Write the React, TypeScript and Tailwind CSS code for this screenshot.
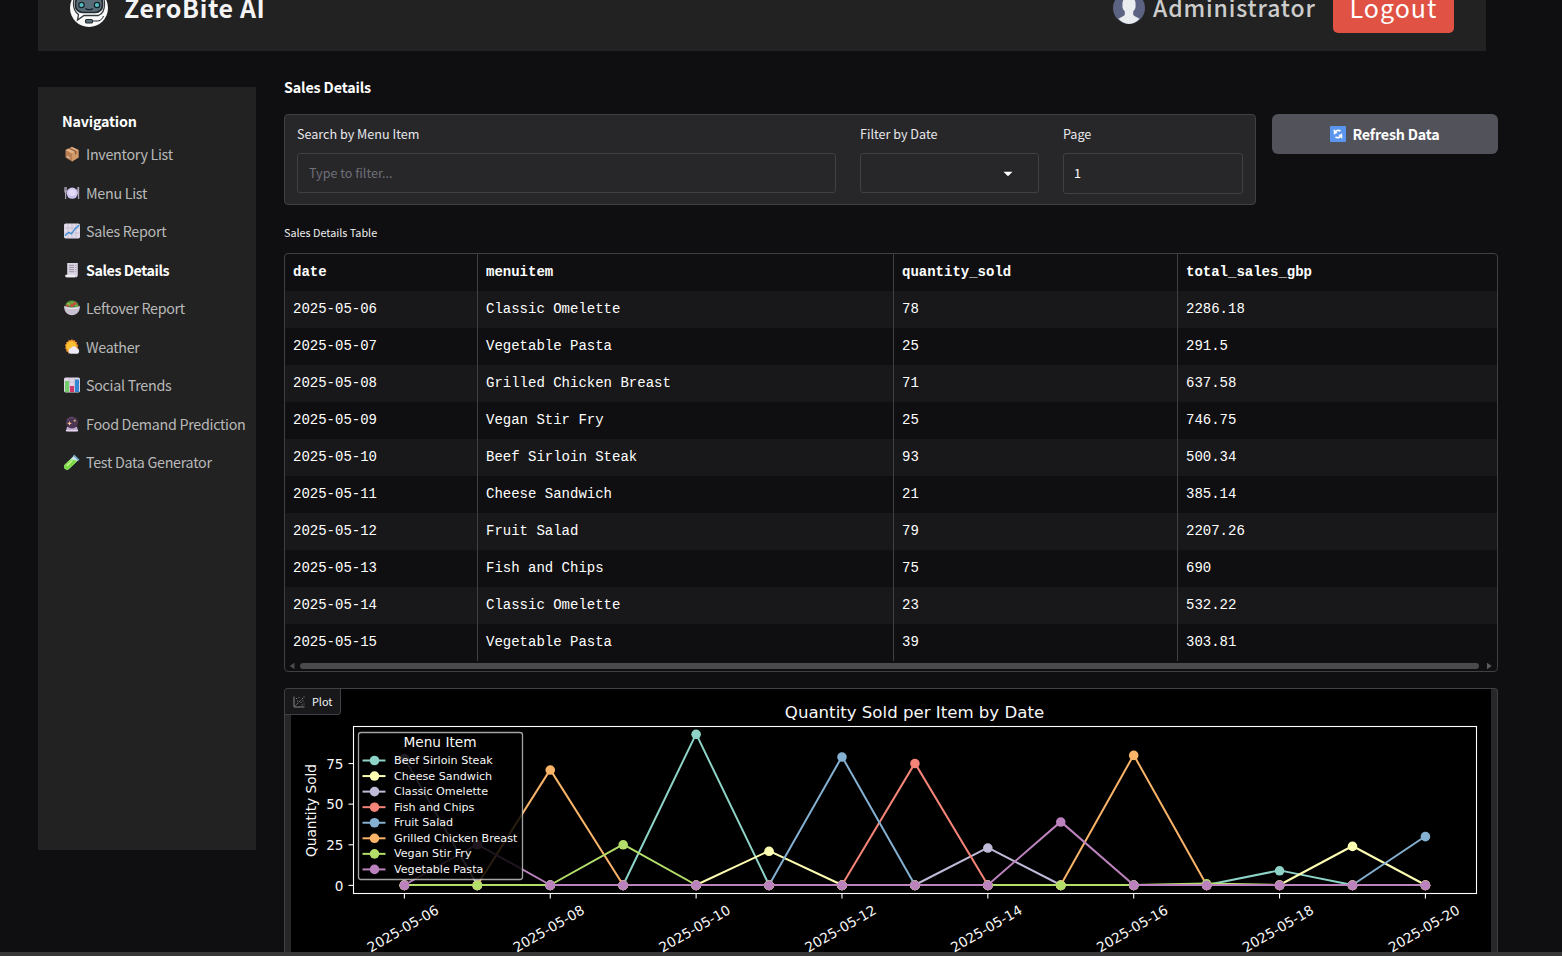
import type { ReactNode } from "react";

const SANS = "font-['Noto_Sans_CJK_SC',sans-serif]";

const Box = () => (
  <svg viewBox="0 0 16 16" className="size-4">
    <path d="M8 1 14.500 4v7.500L8 15.400 1.500 11.500V4z" fill="#b97f55" />
    <path d="M8 1 14.500 4 8 7.400 1.500 4z" fill="#e3b183" />
    <path d="M8 7.400 14.500 4v7.500L8 15.400z" fill="#d09a68" />
    <path d="m4.400 2.600 6.600 3.200v3l1.400-.8V5L6 1.900z" fill="#8a5a3c" />
    <path d="m3 10 2.600 1.600v1L3 11z" fill="#efe0d2" />
  </svg>
);
const Plate = () => (
  <svg viewBox="0 0 16 16" className="size-4">
    <path d="M.3 2h2.600v5L2.200 8v6H1V8L.3 7zM13.400 2h1.800v12h-1.300V9h-.8z" fill="#aaa2b4" />
    <path d="M1.200 2v3M2.100 2v3" stroke="#4b4653" strokeWidth=".4" />
    <circle cx="8.200" cy="8.200" r="5.600" fill="#cfc4ee" />
    <circle cx="8.200" cy="8" r="3.700" fill="#e2daf8" />
    <path d="M5.200 10.400a3.800 3.800 0 0 0 6 0" fill="none" stroke="#b5a6dd" strokeWidth=".7" />
  </svg>
);
const ChartUp = () => (
  <svg viewBox="0 0 16 16" className="size-4">
    <rect y=".6" width="16" height="14.800" rx="1.600" fill="#e2dbea" />
    <path d="M4 .8v14.400M8 .8v14.400M12 .8v14.400M.2 5h15.600M.2 10h15.600" stroke="#bdb2c9" strokeWidth=".6" />
    <path d="m.8 12.600 4.200-3.300 2.400 1.600 3.800-5.200L15.300 2" fill="none" stroke="#3b8fd0" strokeWidth="1.400" />
  </svg>
);
const Receipt = () => (
  <svg viewBox="0 0 16 16" className="size-4">
    <path d="M3.200 1h10.600v12.800l-1 1.400H2.600c-1 0-1.400-.8-1.100-1.900h1.700z" fill="#d9d3e2" />
    <path d="M1.400 12.700h9.500v2.500H2.500c-.8 0-1.200-.8-1.100-2.500z" fill="#f0ecf5" />
    <path d="M5 3.400h5M5 5.500h5M5 7.600h5M5 9.700h5M11.300 3.400h1M11.300 5.500h1M11.300 7.600h1M11.300 9.700h1" stroke="#8b8494" strokeWidth=".8" />
  </svg>
);
const Salad = () => (
  <svg viewBox="0 0 16 16" className="size-4">
    <ellipse cx="8" cy="5.200" rx="6.600" ry="4.600" fill="#4f8b39" />
    <circle cx="4.600" cy="4.300" r="1.800" fill="#82bb4a" />
    <circle cx="8" cy="2.600" r="1.700" fill="#6fa93c" />
    <circle cx="11" cy="3.600" r="1.600" fill="#ce4a3f" />
    <circle cx="3.500" cy="5.800" r="1.300" fill="#c9473f" />
    <circle cx="8" cy="5.200" r="1.700" fill="#c9503f" />
    <circle cx="12.400" cy="5.800" r="1.300" fill="#75b546" />
    <path d="M.2 5.800C3 8.100 13 8.100 15.800 5.800c.4 5.400-2.700 9.400-7.800 9.400S-.2 11.200.2 5.800z" fill="#c9c1d0" />
    <path d="M.6 7.200c3.600 1.900 11.200 1.900 14.800 0" fill="none" stroke="#ece6f0" strokeWidth="1" />
  </svg>
);
const Sun = () => (
  <svg viewBox="0 0 16 16" className="size-4">
    <path d="m8 0 1 1.600 1.800-.7.3 1.900 2 .3-.4 1.900 1.700 1.200-1 1.600 1 1.800-10 5.100-.4-2-1.900-.3.4-1.900L.9 9.300l1-1.600L.8 6l1.600-1.100L2.200 3l2-.3.500-1.900 1.900.7z" fill="#ed8f2d" />
    <circle cx="7.200" cy="7.200" r="5" fill="#fbc02f" />
    <path d="M6.800 14.800a2.900 2.900 0 0 1 .1-5.700 3.400 3.400 0 0 1 6.200.5 2.700 2.700 0 0 1 .2 5.200z" fill="#edeaf6" />
    <path d="M5.200 13.900c2 1.300 7.200 1.200 9.500 0-.4.600-1 .9-1.700.9H7.200c-.8 0-1.500-.3-2-.9z" fill="#bdb7d8" />
  </svg>
);
const Bars = () => (
  <svg viewBox="0 0 16 16" className="size-4">
    <rect y=".6" width="16" height="14.800" rx="1.600" fill="#ded6e6" />
    <path d="M5.500.8v14M10.500.8v14M0 5h16M0 10h16" stroke="#b9aec4" strokeWidth=".5" />
    <path d="M1 4h4v11H1z" fill="#72cc6a" />
    <path d="M6 9h4v6H6z" fill="#cf3868" />
    <path d="M11 2.500h4V15h-4z" fill="#3386d2" />
  </svg>
);
const Crystal = () => (
  <svg viewBox="0 0 16 16" className="size-4">
    <path d="M3 11h10l1.200 4c-2 .8-10.400.8-12.400 0z" fill="#c0abd0" />
    <path d="M2.200 14h11.600l.4 1.200H1.800z" fill="#e7daee" />
    <circle cx="8" cy="6.500" r="6.100" fill="#4b3755" />
    <path d="M3.500 4.400A5.200 5.200 0 0 1 9 1.600" fill="none" stroke="#6c5379" strokeWidth=".8" />
    <path d="m5.500 5 .7 1.700 1.700.7-1.700.7-.7 1.700-.7-1.700-1.700-.7 1.700-.7z" fill="#ffc28d" />
    <path d="m10.800 3 .5 1.200 1.200.5-1.200.5-.5 1.200-.5-1.200-1.200-.5 1.200-.5z" fill="#dcb66c" />
  </svg>
);
const Tube = () => (
  <svg viewBox="0 0 16 16" className="size-4">
    <path d="m9.800 1.800 4.400 4.400-9 8.600a3 3 0 0 1-4.300-4.200z" fill="#c7e4e3" />
    <path d="m6.400 5.300 6.900 1.700-8.100 7.800a3 3 0 0 1-4.300-4.200z" fill="#7cda47" />
    <path d="m3.200 11.400 4.700-4.600" stroke="#c6f68f" strokeWidth="1.500" strokeLinecap="round" />
    <path d="m10.200.6 5.300 5.200-1.200 1L9.200 1.700z" fill="#76a9cf" />
  </svg>
);

const nav: [string, ReactNode][] = [
  ["Inventory List", <Box />],
  ["Menu List", <Plate />],
  ["Sales Report", <ChartUp />],
  ["Sales Details", <Receipt />],
  ["Leftover Report", <Salad />],
  ["Weather", <Sun />],
  ["Social Trends", <Bars />],
  ["Food Demand Prediction", <Crystal />],
  ["Test Data Generator", <Tube />],
];

const rows = [
  ["2025-05-06", "Classic Omelette", "78", "2286.18"],
  ["2025-05-07", "Vegetable Pasta", "25", "291.5"],
  ["2025-05-08", "Grilled Chicken Breast", "71", "637.58"],
  ["2025-05-09", "Vegan Stir Fry", "25", "746.75"],
  ["2025-05-10", "Beef Sirloin Steak", "93", "500.34"],
  ["2025-05-11", "Cheese Sandwich", "21", "385.14"],
  ["2025-05-12", "Fruit Salad", "79", "2207.26"],
  ["2025-05-13", "Fish and Chips", "75", "690"],
  ["2025-05-14", "Classic Omelette", "23", "532.22"],
  ["2025-05-15", "Vegetable Pasta", "39", "303.81"],
];

const series: { name: string; color: string; points: Record<number, number> }[] = [
  { name: "Beef Sirloin Steak", color: "#8dd3c7", points: { 4: 93, 12: 9 } },
  { name: "Cheese Sandwich", color: "#feffb3", points: { 5: 21, 13: 24 } },
  { name: "Classic Omelette", color: "#bfbbd9", points: { 0: 78, 8: 23 } },
  { name: "Fish and Chips", color: "#f58478", points: { 7: 75 } },
  { name: "Fruit Salad", color: "#84b0d1", points: { 6: 79, 14: 30 } },
  { name: "Grilled Chicken Breast", color: "#f9b469", points: { 2: 71, 10: 80 } },
  { name: "Vegan Stir Fry", color: "#b3de69", points: { 3: 25, 11: 1 } },
  { name: "Vegetable Pasta", color: "#bc82bd", points: { 1: 25, 9: 39 } },
];
const days = Array.from({ length: 15 }, (_, i) => i);
const px = (d: number) => 404.4 + d * 72.93;
const py = (v: number) => 885.4 - v * 1.625;

function Chart() {
  return (
    <svg viewBox="291 689 1200 263" width="1200" height="263" className="block bg-black font-['DejaVu_Sans',sans-serif]" fill="#f8f8f8">
      <text x="914.500" y="717.600" fontSize="16.600" textAnchor="middle">Quantity Sold per Item by Date</text>
      <text transform="translate(316 810.500) rotate(-90)" fontSize="13.700" textAnchor="middle">Quantity Sold</text>
      {[0, 25, 50, 75].map((v) => (
        <g key={v}>
          <path d={`M348.500 ${py(v)}H353.500`} stroke="#fff" strokeWidth="1.100" />
          <text x="343.500" y={py(v) + 5.2} fontSize="13.600" textAnchor="end">{v}</text>
        </g>
      ))}
      {[0, 2, 4, 6, 8, 10, 12, 14].map((d) => (
        <g key={d}>
          <path d={`M${px(d)} 893.500v5`} stroke="#fff" strokeWidth="1.100" />
          <text transform={`translate(${px(d) - 1.6} 928.500) rotate(-30)`} y="5" fontSize="13.700" textAnchor="middle">
            {`2025-05-${String(d + 6).padStart(2, "0")}`}
          </text>
        </g>
      ))}
      {series.map((s) => (
        <g key={s.name}>
          <polyline points={days.map((d) => `${px(d)},${py(s.points[d] ?? 0) - 0.4}`).join(" ")} fill="none" stroke={s.color} strokeWidth="2" strokeLinejoin="round" />
          {days.map((d) => (
            <circle key={d} cx={px(d)} cy={py(s.points[d] ?? 0)} r="4.800" fill={s.color} />
          ))}
        </g>
      ))}
      <rect x="353.500" y="726.500" width="1123" height="167" fill="none" stroke="#fff" strokeWidth="1.100" />
      <rect x="358.500" y="732.500" width="164" height="147" rx="2.500" fill="#000" fillOpacity=".84" stroke="#ccc" strokeOpacity=".8" strokeWidth="1.300" />
      <text x="440" y="746.800" fontSize="13.700" textAnchor="middle">Menu Item</text>
      {series.map((s, i) => (
        <g key={s.name}>
          <path d={`M362.500 ${760.5 + i * 15.56}h23`} stroke={s.color} strokeWidth="2" />
          <circle cx="374.500" cy={760.5 + i * 15.56} r="4.800" fill={s.color} />
          <text x="394" y={764.1 + i * 15.56} fontSize="11.150">{s.name}</text>
        </g>
      ))}
    </svg>
  );
}

function RobotLogo() {
  return (
    <svg viewBox="0 0 38 38" className="size-[38px]">
      <circle cx="19" cy="19" r="19" fill="#fafafa" />
      <path d="M8 6h22c3 1 4.500 4 4.500 9s-2 10-6 11.500H14L7.500 31l1-5.500C5 23 3.500 19 3.500 15S5 7 8 6z" fill="#fff" stroke="#33383c" strokeWidth="1.300" />
      <rect x="5.500" y="7" width="27" height="16.500" rx="7" fill="#596d78" stroke="#20272d" strokeWidth="1.700" />
      <circle cx="11.500" cy="16" r="2.700" fill="#54bec2" stroke="#182126" strokeWidth="1.200" />
      <circle cx="27" cy="16" r="2.700" fill="#54bec2" stroke="#182126" strokeWidth="1.200" />
      <path d="M15.500 19.500c1.500 1.500 6 1.500 7.500 0" fill="none" stroke="#182126" strokeWidth="1.100" />
      <rect x="15.500" y="30.500" width="7" height="3.500" rx="1.300" fill="#596d78" stroke="#20272d" strokeWidth="1.100" />
      <path d="M23 32h5c3-.5 4.500-2.500 5.500-5" fill="none" stroke="#20272d" strokeWidth="1" />
    </svg>
  );
}

function Avatar() {
  return (
    <svg viewBox="0 0 32 32" className="size-8">
      <circle cx="16" cy="16" r="16" fill="#5c6282" />
      <path d="M16 5c4.500 0 7 3 6.500 8 .5 3-1 5-2.300 6.200v3.300c.6 2 4.300 2.700 6.300 4.200A15.900 15.900 0 0 1 16 32a15.900 15.900 0 0 1-10.500-5.300c2-1.500 5.700-2.200 6.300-4.200v-3.300C10.500 18 9 16 9.500 13 9 8 11.500 5 16 5z" fill="#e9edf0" />
    </svg>
  );
}

const label = "block text-[12.600px] leading-5 text-[#e8e8ea] whitespace-nowrap";
const field = "mt-[9px] flex items-center rounded-[3px] border border-[#3f3f46] bg-[#27272a] text-[12.600px] leading-5";

export default function App() {
  return (
    <div className={`${SANS} flex h-[956px] w-[1562px] flex-col overflow-hidden bg-[#0f0f11] text-white`}>
      <header className="-mt-[35px] ml-[38px] flex h-[86px] w-[1448px] shrink-0 items-center bg-[#222222] pr-8 pl-8">
        <RobotLogo />
        <span className="ml-4 pb-[3px] text-[25px] leading-9 font-bold tracking-[0.600px] whitespace-nowrap text-[#f4f4f5]">ZeroBite AI</span>
        <div className="ml-auto flex items-center">
          <Avatar />
          <span className="ml-2 w-[180px] pb-[3px] text-[23px] leading-9 font-medium tracking-[0.850px] whitespace-nowrap text-[#cccccc]">Administrator</span>
          <button className="h-[50px] w-[121px] rounded-[5px] bg-[#e05243] pb-[3px] text-[25px] leading-9 tracking-[1px] whitespace-nowrap">Logout</button>
        </div>
      </header>

      <div className="flex h-[901px] shrink-0">
        <aside className="mt-9 ml-[38px] h-[763px] w-[218px] shrink-0 bg-[#222222] pt-[23px] pl-6">
          <h2 className="text-[14.300px] leading-[22px] font-bold tracking-[-0.200px]">Navigation</h2>
          <nav>
            {nav.map(([text, icon]) => (
              <a key={text} className={`flex h-[38.500px] items-start pt-[11px] text-[14.300px] leading-[22px] whitespace-nowrap ${text === "Sales Details" ? "font-bold tracking-[-0.450px] text-white" : "tracking-[-0.290px] text-[#b9b9b9]"}`}>
                <span className="mt-[3px] mr-1.5 ml-0.5">{icon}</span>
                {text}
              </a>
            ))}
          </nav>
        </aside>

        <main className="ml-7 flex w-[1214px] flex-col">
          <h1 className="mt-[25px] text-[14.300px] leading-[22px] font-bold tracking-[-0.150px]">Sales Details</h1>
          <section className="mt-4 flex items-start gap-4">
            <div className="flex h-[91px] w-[972px] gap-6 rounded-[4px] border border-[#3f3f46] bg-[#27272a] px-3 pt-[9px]">
              <div className="w-[539px]">
                <span className={label}>Search by Menu Item</span>
                <div className={`${field} h-10 pl-[11px] text-[#6f6f78]`}>Type to filter...</div>
              </div>
              <div className="w-[179px]">
                <span className={label}>Filter by Date</span>
                <div className={`${field} h-10 justify-end pr-[25px]`}>
                  <svg viewBox="0 0 10 6" className="mt-0.5 h-1.5 w-2.5"><path d="M.5.7h9L5 5.300z" fill="#fff" /></svg>
                </div>
              </div>
              <div className="w-[180px]">
                <span className={label}>Page</span>
                <div className={`${field} h-[41px] pb-0.5 pl-2.5 text-white`}>1</div>
              </div>
            </div>
            <button className="flex h-10 w-[226px] items-center justify-center gap-1.5 rounded-md bg-[#52525b] text-[14.300px] leading-[22px] font-bold tracking-[-0.200px]">
              <svg viewBox="0 0 16 16" className="size-4">
                <rect width="16" height="16" rx="1" fill="#5a96f0" />
                <path d="M4.600 8.400a3.700 3.700 0 0 1 5.900-3.300M11.400 7.600a3.700 3.700 0 0 1-5.900 3.300" fill="none" stroke="#fff" strokeWidth="1.700" />
                <path d="M3.700 3v4.200h4.100zM12.300 13V8.800H8.200z" fill="#fff" />
              </svg>
              Refresh Data
            </button>
          </section>

          <span className="mt-[18px] text-[10.800px] leading-[18px] text-[#eeeeee]">Sales Details Table</span>
          <section className="mt-3 h-[419px] shrink-0 overflow-hidden rounded-[4px] border border-[#3f3f46] font-['Liberation_Mono',monospace] text-[14px]">
            {[["date", "menuitem", "quantity_sold", "total_sales_gbp"], ...rows].map((r, i) => (
              <div key={i} className={`grid h-[37px] grid-cols-[193px_416px_284px_319px] ${i === 0 ? "font-bold" : ""} ${i % 2 ? "bg-[#18181b]" : ""}`}>
                {r.map((c, j) => (
                  <div key={j} className={`flex items-center pb-0.5 pl-2 whitespace-nowrap ${j < 3 ? "border-r border-[#3f3f46]" : ""}`}>
                    <span className="leading-5">{c}</span>
                  </div>
                ))}
              </div>
            ))}
            <div className="flex h-2.5 items-center">
              <svg viewBox="0 0 6 8" className="ml-1 h-2 w-1.5"><path d="M5.500.8v6.400L.8 4z" fill="#4d4d50" /></svg>
              <span className="ml-[5px] h-1.5 w-[1179px] rounded-full bg-[#4a4a4c]" />
              <svg viewBox="0 0 6 8" className="ml-[7px] h-2 w-1.5"><path d="M1 .8v6.400L5.700 4z" fill="#5d5d60" /></svg>
            </div>
          </section>

          <section className="relative mt-4 h-[264px] shrink-0 overflow-hidden rounded-t-[4px] border border-b-0 border-[#3f3f46] bg-[#27272a] pl-1.5">
            <Chart />
            <div className="absolute top-0 left-0 flex h-[26px] w-14 items-center rounded-br-[4px] border-r border-b border-[#3f3f46] bg-[#18181b] pb-0.5 pl-2 text-[10.800px] leading-4 text-[#f4f4f5]">
              <svg viewBox="0 0 12 12" className="mt-0.5 mr-[7px] size-3 shrink-0" fill="none" stroke="#85858c" strokeWidth="1">
                <path d="M1 .5v10.500h10.500" />
                <path d="m2.500 9.500 7.500-7.500" strokeDasharray="1.500 .8" />
                <path d="M3 2.500h1M5.500 1.500h1M4 5h1M7.500 6.500h1M9.500 5h1M8.500 9h1M10.500 1h1M10.500 8h1" />
              </svg>
              Plot
            </div>
          </section>
        </main>
      </div>
      <footer className="h-1 shrink-0 bg-[#393839]" />
    </div>
  );
}
